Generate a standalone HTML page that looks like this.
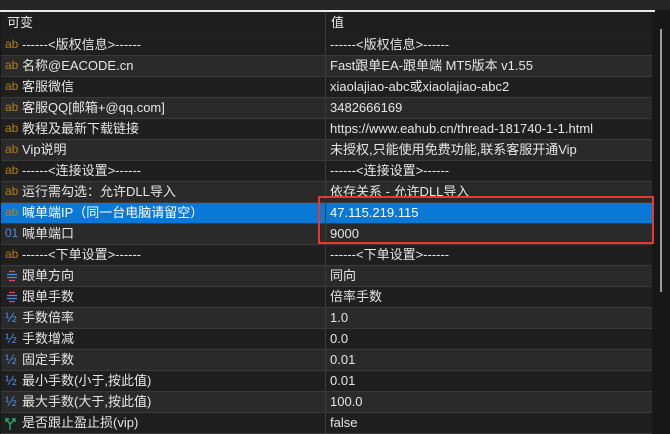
<!DOCTYPE html>
<html><head><meta charset="utf-8"><style>
*{margin:0;padding:0;box-sizing:border-box}
body{width:670px;height:434px;overflow:hidden;background:#171717;position:relative;font-family:"Liberation Sans","Noto Sans CJK SC",sans-serif;font-size:13px;color:#e6e6e6}
.top{position:absolute;left:0;top:0;width:670px;height:10px;background:#262626}
.wl{position:absolute;left:0;top:10px;width:655px;height:2px;background:#e8e8e8}
.hdr{position:absolute;left:1px;top:12px;width:651px;height:23px;background:#1e1e1e;line-height:22px}
.r{position:absolute;left:1px;width:651px;height:21px;border-bottom:1px solid #3a3a3a;white-space:nowrap;line-height:20px}
.d{background:#1f1f1f}.l{background:#2a2a2a}.s{background:#0a78d7;color:#fff}
.c1{position:absolute;left:21px;top:0}
.c2{position:absolute;left:329px;top:0}
.ic{position:absolute;left:4px;top:0;width:14px;height:20px;font-size:12px;line-height:19px}
svg.ic{top:3px;height:14px}
.ab{color:#b0801a}
.vd{position:absolute;left:325px;top:12px;width:1px;height:422px;background:#3a3a3a}
.thumb{position:absolute;left:660px;top:29px;width:2px;height:263px;background:#9a9a9a}
.red{position:absolute;left:318px;top:196px;width:336px;height:48px;border:2px solid #e8382e}
</style></head><body>
<div class="top"></div><div class="wl"></div>
<div class="hdr"><span style="position:absolute;left:6px">可变</span><span style="position:absolute;left:330px">值</span></div>
<div class="r d" style="top:35px"><span class="ic ab">ab</span><span class="c1">------&lt;版权信息&gt;------</span><span class="c2">------&lt;版权信息&gt;------</span></div>
<div class="r l" style="top:56px"><span class="ic ab">ab</span><span class="c1">名称@EACODE.cn</span><span class="c2">Fast跟单EA-跟单端 MT5版本 v1.55</span></div>
<div class="r d" style="top:77px"><span class="ic ab">ab</span><span class="c1">客服微信</span><span class="c2">xiaolajiao-abc或xiaolajiao-abc2</span></div>
<div class="r l" style="top:98px"><span class="ic ab">ab</span><span class="c1">客服QQ[邮箱+@qq.com]</span><span class="c2">3482666169</span></div>
<div class="r d" style="top:119px"><span class="ic ab">ab</span><span class="c1">教程及最新下载链接</span><span class="c2">https://www.eahub.cn/thread-181740-1-1.html</span></div>
<div class="r l" style="top:140px"><span class="ic ab">ab</span><span class="c1">Vip说明</span><span class="c2">未授权,只能使用免费功能,联系客服开通Vip</span></div>
<div class="r d" style="top:161px"><span class="ic ab">ab</span><span class="c1">------&lt;连接设置&gt;------</span><span class="c2">------&lt;连接设置&gt;------</span></div>
<div class="r l" style="top:182px"><span class="ic ab">ab</span><span class="c1">运行需勾选：允许DLL导入</span><span class="c2">依存关系 - 允许DLL导入</span></div>
<div class="r s" style="top:203px"><span class="ic ab">ab</span><span class="c1">喊单端IP（同一台电脑请留空）</span><span class="c2">47.115.219.115</span></div>
<div class="r l" style="top:224px"><span class="ic" style="color:#4a8ee0">01</span><span class="c1">喊单端口</span><span class="c2">9000</span></div>
<div class="r d" style="top:245px"><span class="ic ab">ab</span><span class="c1">------&lt;下单设置&gt;------</span><span class="c2">------&lt;下单设置&gt;------</span></div>
<div class="r l" style="top:266px"><svg class="ic" viewBox="0 0 14 14"><path d="M4 2.5h6M4 11.5h6" stroke="#e84a4a" stroke-width="1.3"/><path d="M2 5.5h10M2 8.5h10" stroke="#4a8ee0" stroke-width="1.3"/></svg><span class="c1">跟单方向</span><span class="c2">同向</span></div>
<div class="r d" style="top:287px"><svg class="ic" viewBox="0 0 14 14"><path d="M4 2.5h6M4 11.5h6" stroke="#e84a4a" stroke-width="1.3"/><path d="M2 5.5h10M2 8.5h10" stroke="#4a8ee0" stroke-width="1.3"/></svg><span class="c1">跟单手数</span><span class="c2">倍率手数</span></div>
<div class="r l" style="top:308px"><span class="ic" style="color:#4a8ee0;font-size:14px">½</span><span class="c1">手数倍率</span><span class="c2">1.0</span></div>
<div class="r d" style="top:329px"><span class="ic" style="color:#4a8ee0;font-size:14px">½</span><span class="c1">手数增减</span><span class="c2">0.0</span></div>
<div class="r l" style="top:350px"><span class="ic" style="color:#4a8ee0;font-size:14px">½</span><span class="c1">固定手数</span><span class="c2">0.01</span></div>
<div class="r d" style="top:371px"><span class="ic" style="color:#4a8ee0;font-size:14px">½</span><span class="c1">最小手数(小于,按此值)</span><span class="c2">0.01</span></div>
<div class="r l" style="top:392px"><span class="ic" style="color:#4a8ee0;font-size:14px">½</span><span class="c1">最大手数(大于,按此值)</span><span class="c2">100.0</span></div>
<div class="r d" style="top:413px"><svg class="ic" viewBox="0 0 14 14"><path d="M5 14V8L2 4M5 8l5-5M7 3h3v3M1 6V3h3" stroke="#1fb070" stroke-width="1.4" fill="none"/></svg><span class="c1">是否跟止盈止损(vip)</span><span class="c2">false</span></div>
<div class="vd"></div>
<div class="thumb"></div>
<div class="red"></div>
</body></html>
